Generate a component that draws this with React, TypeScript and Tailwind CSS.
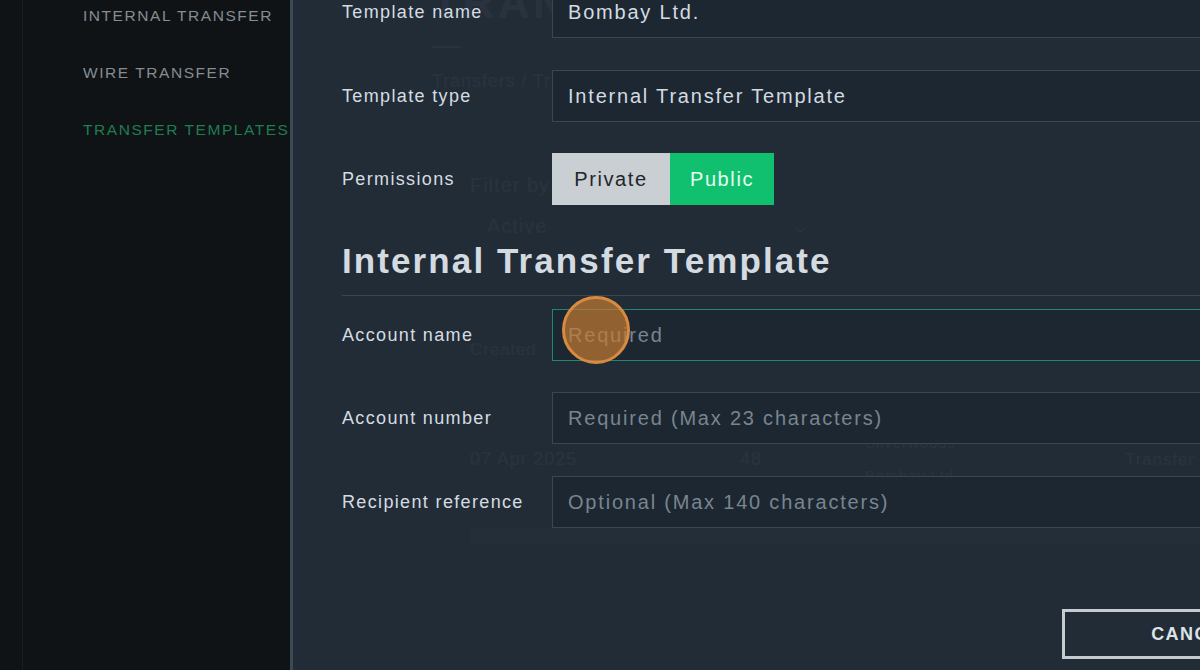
import React from "react";

const font = { fontFamily: '"Liberation Sans", Arial, sans-serif' };

function Field({
  label,
  value,
  placeholder,
  active,
}: {
  label: string;
  value?: string;
  placeholder?: string;
  active?: boolean;
}) {
  return (
    <div className="flex items-center h-[52px]">
      <div className="w-[210px] shrink-0 text-[18px] tracking-[0.075em] text-[#d5dce1]">{label}</div>
      <div
        className={
          "flex-1 h-[52px] flex items-center px-[15px] border bg-[#1d2731] text-[20px] tracking-[0.09em] " +
          (active ? "border-[#23886a]" : "border-[#3a4753]")
        }
      >
        {value ? (
          <span className="text-[#d3dbe1]">{value}</span>
        ) : (
          <span className="text-[#78858f]">{placeholder}</span>
        )}
      </div>
    </div>
  );
}

export default function App() {
  return (
    <div style={font} className="relative w-[1200px] h-[670px] overflow-hidden flex bg-[#0f1316]">
      {/* Sidebar */}
      <aside className="w-[290px] shrink-0 flex h-full">
        <div className="w-[23px] h-full border-r border-[#181d21]" />
        <nav className="flex flex-col gap-[35px] pl-[60px] pt-[5px] text-[15.5px] leading-[22px] tracking-[0.1em] whitespace-nowrap">
          <span className="text-[#868c92]">INTERNAL TRANSFER</span>
          <span className="text-[#868c92]">WIRE TRANSFER</span>
          <span className="text-[#1f7d4f]">TRANSFER TEMPLATES</span>
        </nav>
      </aside>

      {/* Underlying page (ghosted behind the drawer) */}
      <main className="flex-1 h-full bg-[#1b242d] text-[#c8d0d6] relative">
        <div className="pl-[142px] -mt-[30px] text-[44px] font-bold tracking-[0.08em] whitespace-nowrap">
          TRANSFER TEMPLATES
        </div>
        <div className="ml-[142px] mt-[10px] w-[28px] h-[2px] bg-[#c8d0d6]" />
        <div className="pl-[142px] mt-[20px] text-[18px] tracking-[0.05em]">Transfers / Transfer templates</div>
        <div className="pl-[180px] mt-[75px] text-[20px] tracking-[0.05em]">Filter by</div>
        <div className="ml-[180px] mt-[11px] w-[340px] flex justify-between pl-[17px] text-[20px] tracking-[0.05em]">
          <span>Active</span>
          <span>⌄</span>
        </div>
        <div className="ml-[180px] mt-[96px] flex text-[17px] tracking-[0.05em] w-[750px]">
          <span className="w-[270px]">Created</span>
          <span className="w-[125px]">ID</span>
          <span className="w-[260px]">Name</span>
          <span>Type</span>
        </div>
        <div className="ml-[180px] mt-[52px] flex text-[18px] tracking-[0.05em] w-[780px] items-center">
          <span className="w-[270px]">07 Apr 2025</span>
          <span className="w-[125px]">48</span>
          <span className="w-[260px] flex flex-col gap-[10px] text-[15px]">
            <span>Silverwoods</span>
            <span>Bombay Ltd.</span>
          </span>
          <span className="flex flex-col text-[17px] leading-[30px]">
            <span>Internal</span>
            <span>Transfer</span>
            <span>Template</span>
          </span>
        </div>
        <div className="ml-[180px] mt-[22px] h-[18px] bg-[#3a4650]" />
      </main>

      {/* Drawer overlay */}
      <div className="absolute top-0 bottom-0 left-[290px] w-[1100px] border-l-[3px] border-[#3d4954] bg-[#222d38]/[0.96]">
        <div className="-mt-[14px] pl-[49px] w-[1030px] flex flex-col">
          <Field label="Template name" value="Bombay Ltd." />
          <div className="mt-[32px]">
            <Field label="Template type" value="Internal Transfer Template" />
          </div>
          <div className="mt-[31px] flex items-center h-[52px]">
            <div className="w-[210px] shrink-0 text-[18px] tracking-[0.075em] text-[#d5dce1]">Permissions</div>
            <div className="flex h-[52px] text-[20px] tracking-[0.08em]">
              <div className="w-[118px] flex items-center justify-center bg-[#c9cfd3] text-[#1f262c]">Private</div>
              <div className="w-[104px] flex items-center justify-center bg-[#10c06f] text-[#e6fff1]">Public</div>
            </div>
          </div>
          <h2 className="mt-[34px] text-[35px] leading-[44px] font-bold tracking-[0.06em] text-[#d3dbe1] pb-[12px] border-b border-[#3a4651]">
            Internal Transfer Template
          </h2>
          <div className="mt-[13px] relative">
            <Field label="Account name" placeholder="Required" active />
            <div className="absolute left-[220px] top-[-13px] w-[68px] h-[68px] rounded-full border-[3px] border-[#d88b3f] bg-[#c47a33]/70" />
          </div>
          <div className="mt-[31px]">
            <Field label="Account number" placeholder="Required (Max 23 characters)" />
          </div>
          <div className="mt-[32px]">
            <Field label="Recipient reference" placeholder="Optional (Max 140 characters)" />
          </div>
          <div className="mt-[81px] flex gap-[16px] pl-[720px]">
            <button className="w-[262px] h-[50px] shrink-0 border-[3px] border-[#c6cbcf] bg-transparent text-[18px] font-bold tracking-[0.08em] text-[#dce2e6]">
              CANCEL
            </button>
            <button className="w-[200px] h-[50px] shrink-0 bg-[#10c06f] text-[18px] font-bold tracking-[0.08em] text-white">
              SAVE
            </button>
          </div>
        </div>
      </div>
    </div>
  );
}
